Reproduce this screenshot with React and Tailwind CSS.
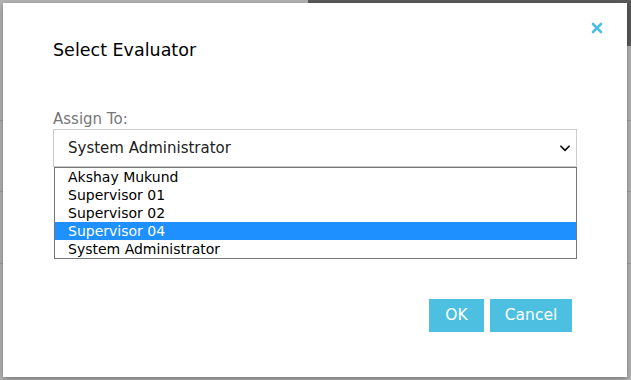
import { useState } from 'react';

const evaluators = ['Akshay Mukund', 'Supervisor 01', 'Supervisor 02', 'Supervisor 04', 'System Administrator'];

export default function App() {
  const [selected] = useState('System Administrator');
  const [hover] = useState('Supervisor 04');

  return (
    <div
      className="relative w-[631px] h-[380px] overflow-hidden bg-[#b4b4b4]"
      style={{ fontFamily: '"DejaVu Sans", Verdana, sans-serif' }}
    >
      {/* page behind the overlay */}
      <div className="absolute left-[308px] top-0 w-[323px] h-[3px] bg-[#5a5a5a]" />
      <div className="absolute right-0 top-0 w-[4px] h-[46px] bg-[#5a5a5a]" />
      <div className="absolute left-0 right-0 top-[120px] h-px bg-[#a0a0a0]" />
      <div className="absolute left-0 right-0 top-[191px] h-px bg-[#a0a0a0]" />
      <div className="absolute left-0 right-0 top-[263px] h-px bg-[#a0a0a0]" />

      {/* dialog */}
      <div className="absolute left-[3px] top-[3px] w-[624px] h-[374px] bg-white shadow-[0_2px_6px_rgba(0,0,0,0.35)]">
        <div className="flex flex-col pl-[50px] pr-[50px] pt-[36px]">
          <h4 className="text-[17.5px] leading-[22px] text-black">Select Evaluator</h4>

          <label className="mt-[48px] text-[15px] leading-[20px] text-[#777]">Assign To:</label>

          <div className="mt-0 flex flex-col">
            <div className="flex h-[38px] items-center justify-between border border-[#ccc] pl-[14px] pr-[4px] text-[15px] text-[#222]">
              <span>{selected}</span>
              <svg width="14" height="14" viewBox="0 0 24 24" fill="none" stroke="#111" strokeWidth="3" strokeLinecap="round" strokeLinejoin="round">
                <path d="M5 9l7 7 7-7" />
              </svg>
            </div>
            <ul className="ml-px flex flex-col border border-[#767676] bg-white">
              {evaluators.map((name) => (
                <li
                  key={name}
                  className={
                    name === hover
                      ? 'h-[18px] pl-[13px] text-[14px] leading-[18px] bg-[#1e90ff] text-white'
                      : 'h-[18px] pl-[13px] text-[14px] leading-[18px] text-black'
                  }
                >
                  {name}
                </li>
              ))}
            </ul>
          </div>
        </div>

        <button className="absolute right-[24px] top-[19px] text-[#4dbfe0]">
          <svg width="12" height="12" viewBox="0 0 12 12" stroke="currentColor" strokeWidth="2.6" strokeLinecap="round">
            <path d="M2 2l8 8M10 2l-8 8" />
          </svg>
        </button>

        <div className="flex justify-end gap-[6px] pr-[55px] pt-[40px]">
          <button className="h-[33px] w-[55px] bg-[#4dbfe0] text-[15.5px] text-white">OK</button>
          <button className="h-[33px] w-[82px] bg-[#4dbfe0] text-[15.5px] text-white">Cancel</button>
        </div>
      </div>
    </div>
  );
}
